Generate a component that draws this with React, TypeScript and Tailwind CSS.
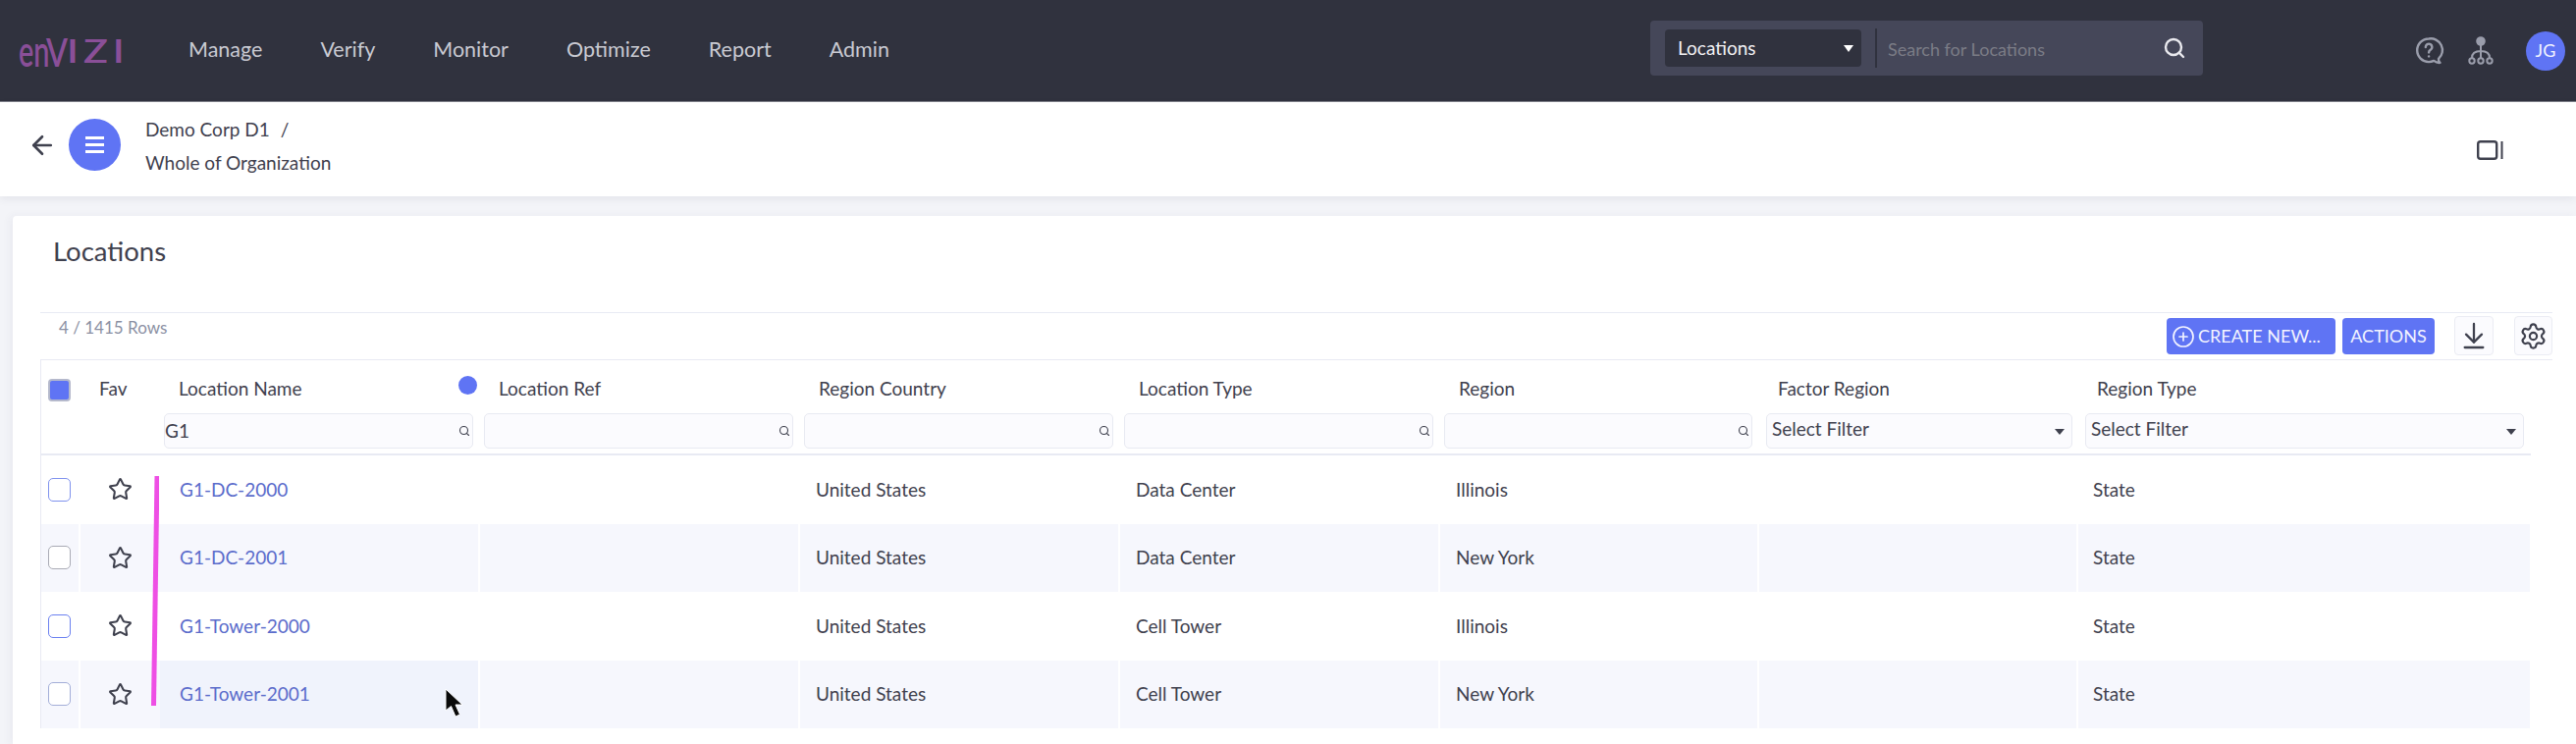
import { ArrowDownToLine, ArrowLeft, CirclePlus, Search, Settings, Star } from "lucide-react";

const font = "font-['Lato','Liberation_Sans',sans-serif]";
const cols = "grid grid-cols-[40px_81px_326px_326px_326px_326px_325px_325px_460px]";
const nav = ["Manage", "Verify", "Monitor", "Optimize", "Report", "Admin"];
const headers = ["Location Ref", "Region Country", "Location Type", "Region", "Factor Region", "Region Type"];
const rows = [
  { name: "G1-DC-2000", type: "Data Center", region: "Illinois", box: "border-[#7f92ee]" },
  { name: "G1-DC-2001", type: "Data Center", region: "New York", box: "border-[#a9abb5]" },
  { name: "G1-Tower-2000", type: "Cell Tower", region: "Illinois", box: "border-[#6b80f0]" },
  { name: "G1-Tower-2001", type: "Cell Tower", region: "New York", box: "border-[#a3aed8]" },
];

function FilterInput({ value = "" }: { value?: string }) {
  return (
    <div className="pl-[4px] pr-[7px]">
      <div className="flex h-[36px] items-center justify-between rounded-[5px] border border-[#e8eaf2] bg-[#fbfbfe] pr-[2px] text-[19px] text-[#3f414e]">
        <span>{value}</span>
        <Search size={12} strokeWidth={2.2} className="text-[#3f414e]" />
      </div>
    </div>
  );
}

function FilterSelect() {
  return (
    <div className="pl-[7px] pr-[6px]">
      <div className="flex h-[36px] items-center justify-between rounded-[5px] border border-[#e8eaf2] bg-[#fbfbfe] pl-[5px] pr-[7px] pb-[3px] text-[19px] text-[#3f414e]">
        <span>Select Filter</span>
        <span className="mt-[5px] h-0 w-0 border-x-[5px] border-t-[6px] border-x-transparent border-t-[#3f414e]" />
      </div>
    </div>
  );
}

export default function App() {
  return (
    <div className={`${font} relative h-[758px] w-[2624px] overflow-hidden bg-[#f3f4f8] text-[#3f414e]`}>
      <header className="flex h-[104px] items-center border-b border-[#7d7f89] bg-[#30323e]">
        <div className="ml-[19px] flex h-[40px] w-[173px] items-center font-semibold text-[#8a4f98]">
          <span className="w-[28px] origin-left scale-x-[0.64] text-[45px] leading-none">en</span>
          <span className="mt-[3px] w-[21px] origin-left scale-x-[0.8] text-[40px] leading-none">V</span>
          <span className="w-[60px] origin-left scale-x-[1.25] text-[33px] leading-none tracking-[4px]">IZI</span>
        </div>
        <nav className="flex gap-[59px] pb-[2px] text-[21.5px] text-[#c9cad2]">
          {nav.map((n) => (
            <span key={n}>{n}</span>
          ))}
        </nav>
        <div className="mb-[5px] ml-auto flex h-[56px] w-[563px] items-center rounded-[4px] bg-[#454759] pl-[15px]">
          <div className="flex h-[38px] w-[200px] items-center justify-between rounded-[4px] bg-[#30323e] pl-[13px] pr-[8px] text-[19px] text-[#f1f1f4]">
            <span>Locations</span>
            <span className="h-0 w-0 border-x-[5.5px] border-t-[7px] border-x-transparent border-t-white" />
          </div>
          <div className="ml-[14px] h-[40px] w-[2px] bg-[#30323e]" />
          <span className="ml-[11px] mt-[2px] text-[18px] text-[#7b7c86]">Search for Locations</span>
          <Search size={24} strokeWidth={2.4} className="ml-auto mr-[17px] text-[#e9e9ee]" />
        </div>
        <svg width="30" height="30" viewBox="0 0 30 30" fill="none" stroke="#9a9dab" strokeWidth="2.4" className="ml-[216px]">
          <path d="M14 2.5a11.8 11.8 0 1 0 0 23.6c2 0 3.6-.4 5.2-1.2 1.8 1.4 4 2.2 6.3 2-1.2-1-1.7-2.4-1.5-4a11.8 11.8 0 0 0-10-20.4Z" strokeLinejoin="round" />
          <path d="M10.8 11a3.3 3.3 0 1 1 5 2.8c-1.1.7-1.7 1.2-1.7 2.6" strokeLinecap="round" />
          <circle cx="14.1" cy="20.4" r="1.2" fill="#9a9dab" stroke="none" />
        </svg>
        <svg width="26" height="30" viewBox="0 0 26 30" fill="none" stroke="#9a9dab" strokeWidth="2" className="ml-[24px]">
          <circle cx="13" cy="5" r="3.8" fill="#9a9dab" />
          <path d="M13 8v14M13 15c-6 0-9 2-9 7M13 15c6 0 9 2 9 7" />
          <circle cx="4" cy="25" r="2.7" />
          <circle cx="13" cy="25" r="2.7" />
          <circle cx="22" cy="25" r="2.7" />
        </svg>
        <div className="ml-[33px] mr-[11px] flex h-[40px] w-[40px] items-center justify-center rounded-full bg-[#5f74f4] text-[18px] text-[#f2f3ff]">JG</div>
      </header>

      <section className="flex h-[96px] items-center bg-white pb-[9px] pl-[28px] pr-[74px] shadow-[0_3px_8px_rgba(60,64,90,0.08)]">
        <ArrowLeft size={30} strokeWidth={2.1} className="text-[#3f414e]" />
        <div className="ml-[12px] flex h-[53px] w-[53px] flex-col items-center justify-center gap-[4px] rounded-full bg-[#5f74f4]">
          <span className="h-[3px] w-[19px] bg-white" />
          <span className="h-[3px] w-[19px] bg-white" />
          <span className="h-[3px] w-[19px] bg-white" />
        </div>
        <div className="ml-[25px] mt-[2px] flex flex-col gap-[12px] text-[19px] leading-[22px]">
          <span>Demo Corp D1 <span className="ml-[6px]">/</span></span>
          <span>Whole of Organization</span>
        </div>
        <svg width="27" height="20" viewBox="0 0 27 20" fill="none" stroke="#3f414e" className="ml-auto mt-[11px]">
          <rect x="1.2" y="1.2" width="19" height="17.6" rx="2.5" strokeWidth="2.4" />
          <path d="M25.5 1v18" strokeWidth="2" />
        </svg>
      </section>

      <main className="ml-[13px] mt-[20px] h-[540px] rounded-tl-[4px] bg-white pl-[28px] shadow-[-3px_0_8px_rgba(60,64,90,0.05)]">
        <h1 className="ml-[13px] pt-[19px] text-[27.5px] leading-[34px] text-[#3f414e]">Locations</h1>
        <div className="mt-[45px] flex h-[49px] w-[2559px] justify-between border-y border-[#e8eaf3]">
          <span className="ml-[19px] mt-[5px] text-[17px] leading-[20px] text-[#8b90a3]">4 / 1415 Rows</span>
          <div className="flex items-start gap-[7px] pt-[5px]">
            <button className="flex h-[37px] w-[172px] items-center gap-[3px] rounded-[4px] bg-[#5f74f4] pl-[5px] text-[18px] text-[#f2f3ff]">
              <CirclePlus size={24} strokeWidth={1.7} />
              CREATE NEW...
            </button>
            <button className="flex h-[37px] w-[94px] items-center justify-center rounded-[4px] bg-[#5f74f4] text-[18px] text-[#f2f3ff]">ACTIONS</button>
            <button className="ml-[13px] mt-[-2px] flex h-[40px] w-[40px] items-center justify-center rounded-[4px] border border-[#ebecf3] bg-[#fbfbfe]">
              <ArrowDownToLine size={32} strokeWidth={1.7} />
            </button>
            <button className="ml-[14px] mt-[-2px] flex h-[40px] w-[39px] items-center justify-center rounded-[4px] border border-[#ebecf3] bg-[#fbfbfe]">
              <Settings size={29} strokeWidth={1.8} />
            </button>
          </div>
        </div>

        <div className="w-[2537px] border-l border-[#e8eaf3]">
          <div className={`${cols} h-[97px] border-b-2 border-[#e8eaf3] text-[19px]`}>
            <div className="pl-[7px] pt-[19px]">
              <div className="h-[23px] w-[23px] rounded-[4px] border-2 border-[#b5b9cc] bg-[#5f74f4]" />
            </div>
            <div className="pl-[19px] pt-[15px]">Fav</div>
            <div className="flex flex-col">
              <div className="flex h-[54px] items-start justify-between pl-[19px] pt-[15px] pr-[3px]">
                <span>Location Name</span>
                <span className="mt-[1px] h-[19px] w-[19px] rounded-full bg-[#5f74f4]" />
              </div>
              <FilterInput value="G1" />
            </div>
            {headers.map((h, i) => (
              <div key={h} className="flex flex-col">
                <div className="flex h-[54px] items-start pl-[19px] pt-[15px]">{h}</div>
                {i < 4 ? <FilterInput /> : <FilterSelect />}
              </div>
            ))}
          </div>

          {rows.map((r, i) => {
            const alt = i % 2 === 1;
            const bg = alt ? "bg-[#f6f7fd]" : "bg-white";
            const sep = alt ? "border-r-2 border-white" : "";
            return (
              <div key={r.name} className={`${cols} h-[69.5px] items-stretch text-[19px]`}>
                <div className={`${bg} ${sep} flex items-center pl-[7px]`}>
                  <div className={`h-[24px] w-[23px] rounded-[5px] border ${r.box} bg-white`} />
                </div>
                <div className={`${bg} flex items-center pl-[28px]`}>
                  <Star size={25} strokeWidth={2} className="text-[#3f414e]" />
                </div>
                <div className={`${i === 3 ? "bg-[#f0f3fc]" : bg} ${sep} flex items-center pl-[20px] text-[#5b6ccb]`}>{r.name}</div>
                <div className={`${bg} ${sep}`} />
                <div className={`${bg} ${sep} flex items-center pl-[16px]`}>United States</div>
                <div className={`${bg} ${sep} flex items-center pl-[16px]`}>{r.type}</div>
                <div className={`${bg} ${sep} flex items-center pl-[16px]`}>{r.region}</div>
                <div className={`${bg} ${sep}`} />
                <div className={`${bg} flex items-center pl-[15px]`}>State</div>
              </div>
            );
          })}
        </div>
      </main>

      <svg width="8" height="236" viewBox="0 0 8 236" className="absolute left-[154px] top-[484px]">
        <path d="M6 1 L2.5 235" stroke="#ee4fe4" strokeWidth="5" fill="none" />
      </svg>
      <svg width="24" height="34" viewBox="0 0 24 34" className="absolute left-[451px] top-[700px]">
        <path d="M3 2 L3 24 L8.5 19.5 L13 30 L17.5 28 L13 18 L20 18 Z" fill="#0a0a0a" stroke="#ffffff" strokeWidth="1" />
      </svg>
    </div>
  );
}
